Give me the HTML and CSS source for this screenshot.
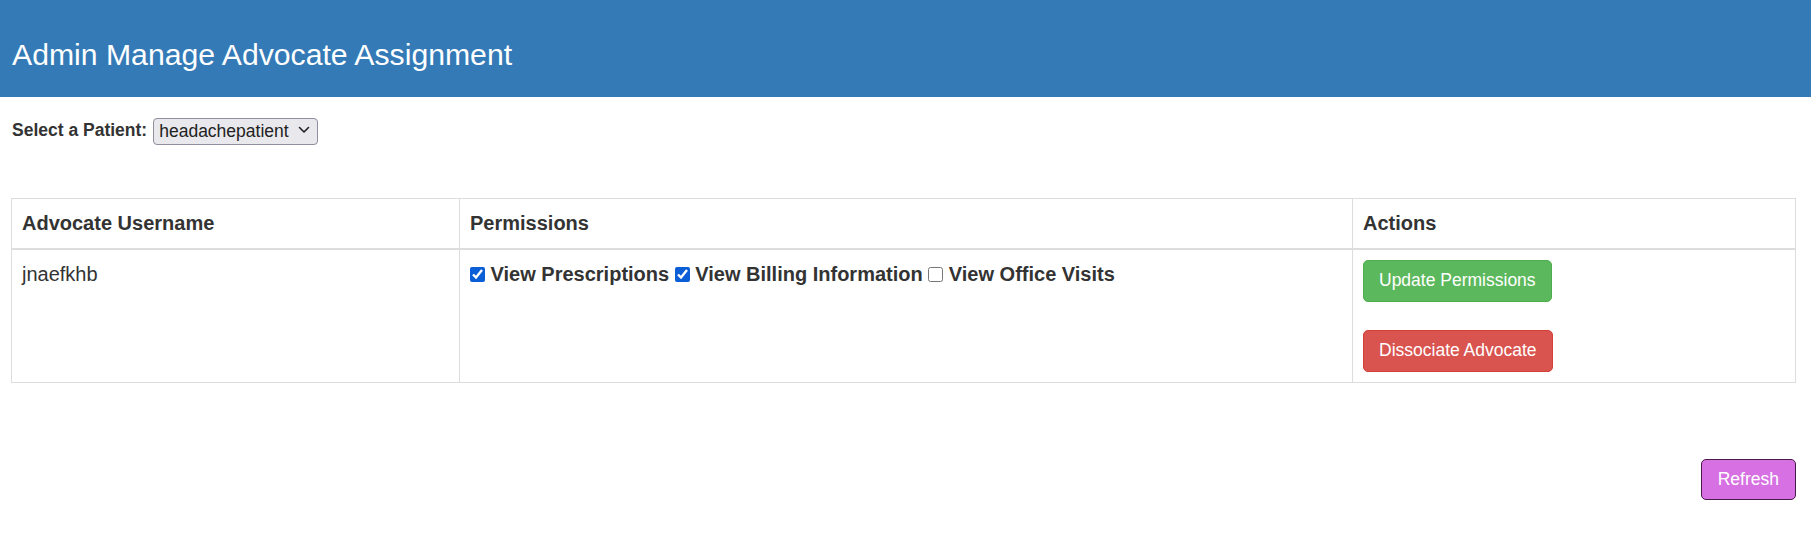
FILE: index.html
```html
<!DOCTYPE html>
<html lang="en">
<head>
<meta charset="utf-8">
<title>Admin Manage Advocate Assignment</title>
<link rel="stylesheet" href="styles.css">
</head>
<body>
<header class="banner">
  <h1 class="banner-title">Admin Manage Advocate Assignment</h1>
</header>
<main class="content">
  <div class="patient-row">
    <label class="patient-label" for="patient">Select a Patient:</label>
    <span class="select-wrap">
      <select id="patient" class="patient-select">
        <option>headachepatient</option>
      </select>
      <svg class="select-arrow" width="12" height="8" viewBox="0 0 12 8" aria-hidden="true">
        <path d="M1.5 1.5 L6 6 L10.5 1.5" fill="none" stroke="#222" stroke-width="1.6" stroke-linecap="round" stroke-linejoin="round"/>
      </svg>
    </span>
  </div>
  <table class="grid">
    <thead>
      <tr>
        <th class="col-user">Advocate Username</th>
        <th class="col-perm">Permissions</th>
        <th class="col-act">Actions</th>
      </tr>
    </thead>
    <tbody>
      <tr>
        <td>jnaefkhb</td>
        <td class="perms">
          <input type="checkbox" class="chk" id="p1" checked> <label for="p1" class="perm-label">View Prescriptions</label>
          <input type="checkbox" class="chk" id="p2" checked> <label for="p2" class="perm-label">View Billing Information</label>
          <input type="checkbox" class="chk" id="p3"> <label for="p3" class="perm-label">View Office Visits</label>
        </td>
        <td>
          <div class="actions">
            <button class="btn btn-success">Update Permissions</button>
            <button class="btn btn-danger">Dissociate Advocate</button>
          </div>
        </td>
      </tr>
    </tbody>
  </table>
  <div class="refresh-row">
    <button class="btn btn-refresh">Refresh</button>
  </div>
</main>
</body>
</html>
```
FILE: styles.css
```css
html, body {
  margin: 0;
  padding: 0;
  background: #fff;
}
body {
  font-family: "Liberation Sans", Arial, sans-serif;
  color: #333;
  font-size: 20px;
  line-height: 28.5px;
}
.banner {
  background: #337ab7;
  height: 97px;
  box-sizing: border-box;
  padding: 37px 0 0 12px;
}
.banner-title {
  margin: 0;
  font-size: 30.2px;
  line-height: 36px;
  font-weight: normal;
  color: #fff;
}
.content {
  padding: 0 15px 0 11px;
}
.patient-row {
  display: flex;
  align-items: center;
  margin-top: 19px;
  gap: 6px;
  padding-left: 1px;
}
.patient-label {
  font-size: 17.5px;
  line-height: 20px;
  font-weight: bold;
}
.select-wrap {
  position: relative;
  display: inline-block;
  height: 27px;
}
.patient-select {
  -webkit-appearance: none;
  appearance: none;
  box-sizing: border-box;
  font-family: "Liberation Sans", Arial, sans-serif;
  font-size: 17.5px;
  line-height: 25px;
  height: 27px;
  width: 165px;
  padding: 0 0 0 5px;
  margin: 0;
  color: #222;
  background-color: #e9e9ed;
  border: 1px solid #8f8f9d;
  border-radius: 4px;
}
.select-arrow {
  position: absolute;
  right: 8px;
  top: 10px;
  pointer-events: none;
}
.grid {
  width: 100%;
  margin-top: 55px;
  border-collapse: collapse;
  border: 1px solid #ddd;
}
.grid th, .grid td {
  border: 1px solid #ddd;
  padding: 10px;
  text-align: left;
  vertical-align: top;
}
.grid th {
  font-weight: bold;
  border-bottom: 2px solid #ddd;
}
.col-user { width: 448px; box-sizing: border-box; }
.col-perm { width: 893px; box-sizing: border-box; }
.col-act { width: auto; }
.perms {
  font-weight: bold;
}
.chk {
  width: 15px;
  height: 15px;
  margin: 0;
  vertical-align: -1px;
  accent-color: #0b5fd6;
}
.actions {
  display: flex;
  flex-direction: column;
  align-items: flex-start;
  gap: 28px;
}
.btn {
  font-family: "Liberation Sans", Arial, sans-serif;
  font-size: 17.5px;
  line-height: 25px;
  padding: 7.5px 15px;
  border: 1px solid transparent;
  border-radius: 5px;
  color: #fff;
  cursor: pointer;
}
.btn-success {
  background: #5cb85c;
  border-color: #4cae4c;
}
.btn-danger {
  background: #d9534f;
  border-color: #d43f3a;
}
.refresh-row {
  display: flex;
  justify-content: flex-end;
  margin-top: 76px;
}
.btn-refresh {
  background: #d771e3;
  border-color: #4a1a4a;
  padding: 7px 16px;
}
```
